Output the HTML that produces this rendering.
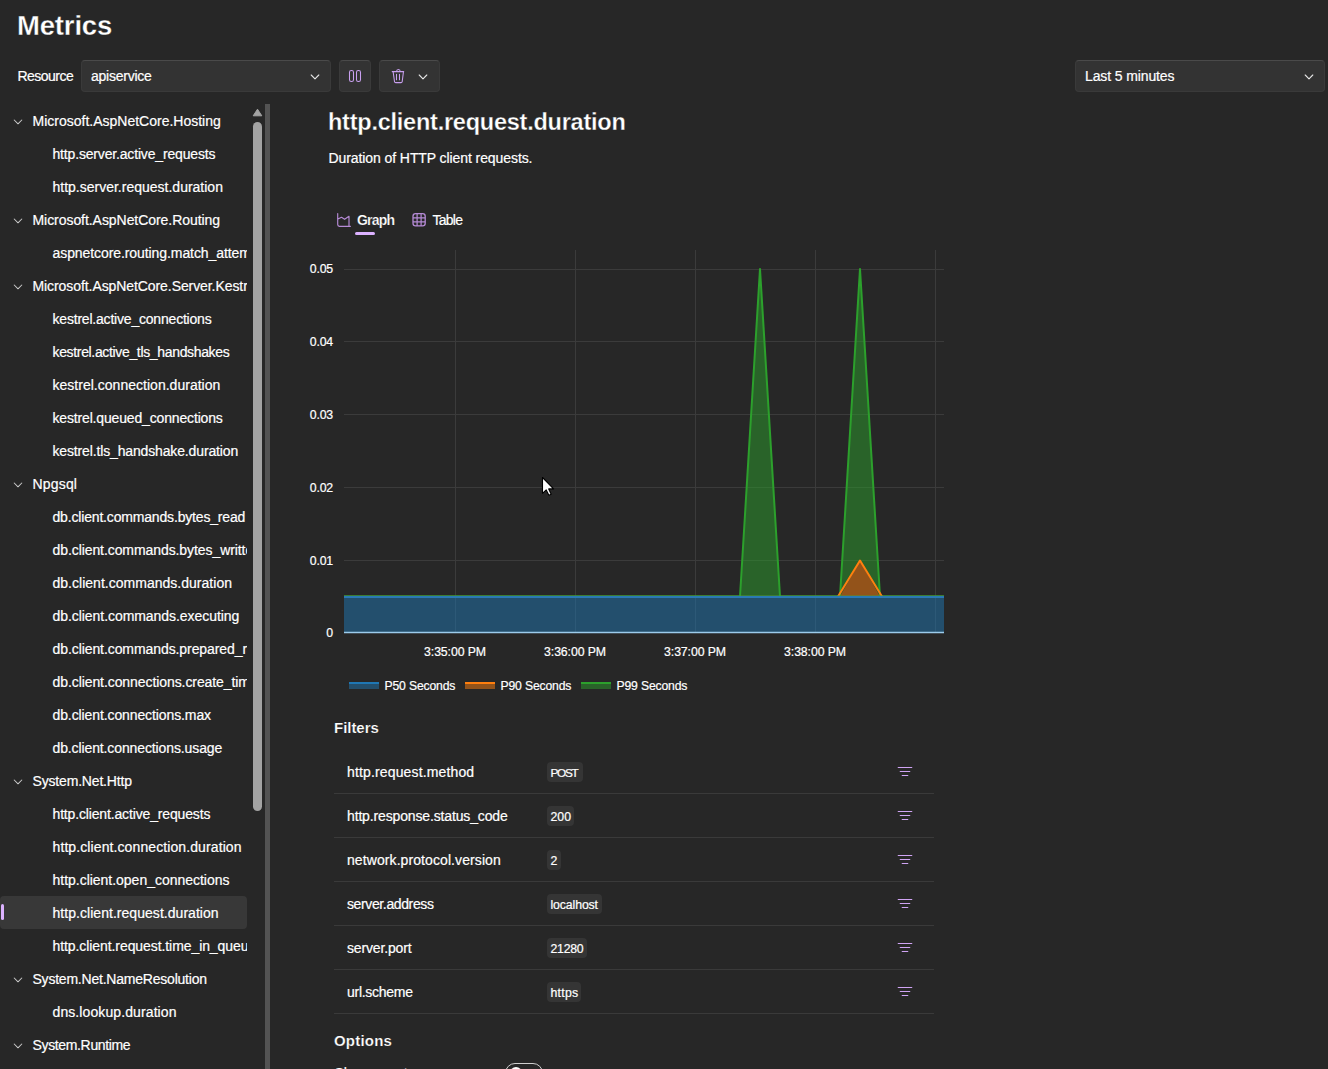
<!DOCTYPE html>
<html><head><meta charset="utf-8"><title>Metrics</title>
<style>
html,body{margin:0;padding:0;}
body{width:1328px;height:1069px;overflow:hidden;background:#272727;position:relative;font-family:"Liberation Sans",sans-serif;color:#fff;}
.t{position:absolute;white-space:nowrap;-webkit-text-stroke:0.2px #fff;}
.ic{position:absolute;overflow:visible;}
.sel{position:absolute;box-sizing:border-box;background:#333333;border:1px solid #3a3a3a;border-top-color:#4a4a4a;border-radius:4px;}
.clip{position:absolute;overflow:hidden;}
.selrow{position:absolute;left:0;width:247px;height:33px;background:#383838;border-radius:4px;}
.ind{position:absolute;left:1px;width:3px;height:16px;border-radius:2px;background:#dcb2ff;}
.badge{position:absolute;height:20px;background:#353535;border-radius:4px;}
</style></head><body>
<div id="tebfe80" class="t" style="left:17px;top:9.47px;font-size:27.5px;line-height:34px;font-weight:700;color:#fff;letter-spacing:-0.167px;-webkit-text-stroke:0.30px #272727;">Metrics</div>
<div id="t3802f4" class="t" style="left:17.5px;top:67.15px;font-size:14.0px;line-height:18px;font-weight:400;color:#fff;letter-spacing:-0.532px;">Resource</div>
<div class="sel" style="left:81px;top:60px;width:250px;height:32px"></div><div id="t47174b" class="t" style="left:91px;top:67.15px;font-size:14.0px;line-height:18px;font-weight:400;color:#fff;letter-spacing:-0.237px;">apiservice</div>
<svg class="ic" style="left:310px;top:72.5px" width="10" height="8" viewBox="0 0 10 8"><path d="M1.2 2 L5 5.8 L8.8 2" fill="none" stroke="#e6e6e6" stroke-width="1.1" stroke-linecap="round" stroke-linejoin="round"/></svg><div class="sel" style="left:339px;top:60px;width:32px;height:32px"></div><svg class="ic" style="left:340px;top:62px" width="28" height="28" viewBox="340 62 28 28"><rect x="349.5" y="70.5" width="4" height="11" rx="1.8" fill="none" stroke="#c9a0f0" stroke-width="1.05"/><rect x="356.5" y="70.5" width="4" height="11" rx="1.8" fill="none" stroke="#c9a0f0" stroke-width="1.05"/></svg><div class="sel" style="left:379px;top:60px;width:61px;height:32px"></div><svg class="ic" style="left:386px;top:64px" width="24" height="24" viewBox="386 64 24 24"><path d="M392.2 71.6 H403.7 M396.6 71.4 Q396.6 69.4 398.4 69.4 Q400.2 69.4 400.2 71.4 M393.2 72.2 L394.5 81.6 Q394.7 82.6 395.7 82.6 H401 Q402 82.6 402.2 81.6 L403.4 72.2 M396.5 74.2 V79.8 M399.5 74.2 V79.8" fill="none" stroke="#c9a0f0" stroke-width="1.05" stroke-linecap="round"/></svg><svg class="ic" style="left:418px;top:72.5px" width="10" height="8" viewBox="0 0 10 8"><path d="M1.2 2 L5 5.8 L8.8 2" fill="none" stroke="#e6e6e6" stroke-width="1.1" stroke-linecap="round" stroke-linejoin="round"/></svg><div class="sel" style="left:1075px;top:60px;width:250px;height:32px"></div><div id="t3238d8" class="t" style="left:1085px;top:67.15px;font-size:14.0px;line-height:18px;font-weight:400;color:#fff;letter-spacing:-0.118px;">Last 5 minutes</div>
<svg class="ic" style="left:1304px;top:72.5px" width="10" height="8" viewBox="0 0 10 8"><path d="M1.2 2 L5 5.8 L8.8 2" fill="none" stroke="#e6e6e6" stroke-width="1.1" stroke-linecap="round" stroke-linejoin="round"/></svg><div class="clip" style="left:0;top:100px;width:247px;height:969px"><svg class="ic" style="left:13px;top:17.5px" width="10" height="8" viewBox="0 0 10 8"><path d="M1.2 2 L5 5.8 L8.8 2" fill="none" stroke="#c8c8c8" stroke-width="1.05" stroke-linecap="round" stroke-linejoin="round"/></svg><div id="t45dcb6" class="t" style="left:32.5px;top:12.15px;font-size:14.0px;line-height:18px;font-weight:400;color:#fff;letter-spacing:0.000px;">Microsoft.AspNetCore.Hosting</div>
<div id="td94e13" class="t" style="left:52.5px;top:45.15px;font-size:14.0px;line-height:18px;font-weight:400;color:#fff;letter-spacing:-0.167px;">http.server.active_requests</div>
<div id="te10f5d" class="t" style="left:52.5px;top:78.15px;font-size:14.0px;line-height:18px;font-weight:400;color:#fff;letter-spacing:0.000px;">http.server.request.duration</div>
<svg class="ic" style="left:13px;top:116.5px" width="10" height="8" viewBox="0 0 10 8"><path d="M1.2 2 L5 5.8 L8.8 2" fill="none" stroke="#c8c8c8" stroke-width="1.05" stroke-linecap="round" stroke-linejoin="round"/></svg><div id="td8bbc0" class="t" style="left:32.5px;top:111.15px;font-size:14.0px;line-height:18px;font-weight:400;color:#fff;letter-spacing:-0.056px;">Microsoft.AspNetCore.Routing</div>
<div id="t6165df" class="t" style="left:52.5px;top:144.15px;font-size:14.0px;line-height:18px;font-weight:400;color:#fff;letter-spacing:-0.08px;">aspnetcore.routing.match_attempts</div>
<svg class="ic" style="left:13px;top:182.5px" width="10" height="8" viewBox="0 0 10 8"><path d="M1.2 2 L5 5.8 L8.8 2" fill="none" stroke="#c8c8c8" stroke-width="1.05" stroke-linecap="round" stroke-linejoin="round"/></svg><div id="t4f10dd" class="t" style="left:32.5px;top:177.15px;font-size:14.0px;line-height:18px;font-weight:400;color:#fff;letter-spacing:-0.08px;">Microsoft.AspNetCore.Server.Kestrel</div>
<div id="t9e4e4d" class="t" style="left:52.5px;top:210.15px;font-size:14.0px;line-height:18px;font-weight:400;color:#fff;letter-spacing:-0.200px;">kestrel.active_connections</div>
<div id="teb6334" class="t" style="left:52.5px;top:243.15px;font-size:14.0px;line-height:18px;font-weight:400;color:#fff;letter-spacing:-0.341px;">kestrel.active_tls_handshakes</div>
<div id="tbc7141" class="t" style="left:52.5px;top:276.15px;font-size:14.0px;line-height:18px;font-weight:400;color:#fff;letter-spacing:0.019px;">kestrel.connection.duration</div>
<div id="t0e443c" class="t" style="left:52.5px;top:309.15px;font-size:14.0px;line-height:18px;font-weight:400;color:#fff;letter-spacing:-0.160px;">kestrel.queued_connections</div>
<div id="td07542" class="t" style="left:52.5px;top:342.15px;font-size:14.0px;line-height:18px;font-weight:400;color:#fff;letter-spacing:-0.145px;">kestrel.tls_handshake.duration</div>
<svg class="ic" style="left:13px;top:380.5px" width="10" height="8" viewBox="0 0 10 8"><path d="M1.2 2 L5 5.8 L8.8 2" fill="none" stroke="#c8c8c8" stroke-width="1.05" stroke-linecap="round" stroke-linejoin="round"/></svg><div id="t6b5c28" class="t" style="left:32.5px;top:375.15px;font-size:14.0px;line-height:18px;font-weight:400;color:#fff;letter-spacing:0.180px;">Npgsql</div>
<div id="t39d226" class="t" style="left:52.5px;top:408.15px;font-size:14.0px;line-height:18px;font-weight:400;color:#fff;letter-spacing:-0.171px;">db.client.commands.bytes_read</div>
<div id="tbe3ab9" class="t" style="left:52.5px;top:441.15px;font-size:14.0px;line-height:18px;font-weight:400;color:#fff;letter-spacing:-0.08px;">db.client.commands.bytes_written</div>
<div id="t870386" class="t" style="left:52.5px;top:474.15px;font-size:14.0px;line-height:18px;font-weight:400;color:#fff;letter-spacing:0.019px;">db.client.commands.duration</div>
<div id="tcdf02e" class="t" style="left:52.5px;top:507.15px;font-size:14.0px;line-height:18px;font-weight:400;color:#fff;letter-spacing:-0.056px;">db.client.commands.executing</div>
<div id="t66de50" class="t" style="left:52.5px;top:540.15px;font-size:14.0px;line-height:18px;font-weight:400;color:#fff;letter-spacing:-0.08px;">db.client.commands.prepared_ratio</div>
<div id="t04cecb" class="t" style="left:52.5px;top:573.15px;font-size:14.0px;line-height:18px;font-weight:400;color:#fff;letter-spacing:-0.08px;">db.client.connections.create_time</div>
<div id="t2ea59d" class="t" style="left:52.5px;top:606.15px;font-size:14.0px;line-height:18px;font-weight:400;color:#fff;letter-spacing:-0.104px;">db.client.connections.max</div>
<div id="t12dd69" class="t" style="left:52.5px;top:639.15px;font-size:14.0px;line-height:18px;font-weight:400;color:#fff;letter-spacing:-0.116px;">db.client.connections.usage</div>
<svg class="ic" style="left:13px;top:677.5px" width="10" height="8" viewBox="0 0 10 8"><path d="M1.2 2 L5 5.8 L8.8 2" fill="none" stroke="#c8c8c8" stroke-width="1.05" stroke-linecap="round" stroke-linejoin="round"/></svg><div id="t6001ff" class="t" style="left:32.5px;top:672.15px;font-size:14.0px;line-height:18px;font-weight:400;color:#fff;letter-spacing:-0.174px;">System.Net.Http</div>
<div id="tb13f27" class="t" style="left:52.5px;top:705.15px;font-size:14.0px;line-height:18px;font-weight:400;color:#fff;letter-spacing:-0.153px;">http.client.active_requests</div>
<div id="t451838" class="t" style="left:52.5px;top:738.15px;font-size:14.0px;line-height:18px;font-weight:400;color:#fff;letter-spacing:0.100px;">http.client.connection.duration</div>
<div id="t2752c8" class="t" style="left:52.5px;top:771.15px;font-size:14.0px;line-height:18px;font-weight:400;color:#fff;letter-spacing:-0.019px;">http.client.open_connections</div>
<div class="selrow" style="top:796px"></div><div class="ind" style="top:804px"></div><div id="ta67757" class="t" style="left:52.5px;top:804.15px;font-size:14.0px;line-height:18px;font-weight:400;color:#fff;letter-spacing:0.042px;">http.client.request.duration</div>
<div id="t272849" class="t" style="left:52.5px;top:837.15px;font-size:14.0px;line-height:18px;font-weight:400;color:#fff;letter-spacing:-0.08px;">http.client.request.time_in_queue</div>
<svg class="ic" style="left:13px;top:875.5px" width="10" height="8" viewBox="0 0 10 8"><path d="M1.2 2 L5 5.8 L8.8 2" fill="none" stroke="#c8c8c8" stroke-width="1.05" stroke-linecap="round" stroke-linejoin="round"/></svg><div id="t0b0372" class="t" style="left:32.5px;top:870.15px;font-size:14.0px;line-height:18px;font-weight:400;color:#fff;letter-spacing:-0.218px;">System.Net.NameResolution</div>
<div id="t178e2d" class="t" style="left:52.5px;top:903.15px;font-size:14.0px;line-height:18px;font-weight:400;color:#fff;letter-spacing:0.100px;">dns.lookup.duration</div>
<svg class="ic" style="left:13px;top:941.5px" width="10" height="8" viewBox="0 0 10 8"><path d="M1.2 2 L5 5.8 L8.8 2" fill="none" stroke="#c8c8c8" stroke-width="1.05" stroke-linecap="round" stroke-linejoin="round"/></svg><div id="t611d66" class="t" style="left:32.5px;top:936.15px;font-size:14.0px;line-height:18px;font-weight:400;color:#fff;letter-spacing:-0.349px;">System.Runtime</div>
</div><svg class="ic" style="left:252px;top:108px" width="11" height="9" viewBox="0 0 11 9"><path d="M5.5 1.2 L9.8 7.8 H1.2 Z" fill="#a3a3a3" stroke="#a3a3a3" stroke-width="1" stroke-linejoin="round"/></svg><div style="position:absolute;left:253px;top:122px;width:9px;height:689px;border-radius:4.5px;background:#a3a3a3"></div><div style="position:absolute;left:265px;top:104px;width:5px;height:965px;background:#535353"></div><div id="t851597" class="t" style="left:328px;top:107.96px;font-size:23.5px;line-height:29px;font-weight:700;color:#fff;letter-spacing:-0.237px;-webkit-text-stroke:0.30px #272727;">http.client.request.duration</div>
<div id="ta14f55" class="t" style="left:328.5px;top:149.15px;font-size:14.0px;line-height:18px;font-weight:400;color:#fff;letter-spacing:-0.085px;">Duration of HTTP client requests.</div>
<svg class="ic" style="left:334px;top:210px" width="20" height="20" viewBox="334 210 20 20"><path d="M337.7 213.6 V224.6 Q337.7 226.3 339.4 226.3 H350.4 M337.9 219.1 L341.5 217.3 L344.6 219.3 L349 216.3 V226.3" fill="none" stroke="#b68bd6" stroke-width="1.15" stroke-linejoin="round" stroke-linecap="round"/></svg><div id="t999c4c" class="t" style="left:357px;top:210.65px;font-size:14.0px;line-height:18px;font-weight:700;color:#fff;letter-spacing:-0.825px;-webkit-text-stroke:0.20px #272727;">Graph</div>
<div style="position:absolute;left:355px;top:232px;width:20px;height:3px;border-radius:2px;background:#dcb2ff"></div><svg class="ic" style="left:409px;top:210px" width="20" height="20" viewBox="409 210 20 20"><rect x="413" y="213.7" width="12.2" height="12.2" rx="2.6" fill="none" stroke="#b68bd6" stroke-width="1.3"/><path d="M413 217.8 H425.2 M413 221.9 H425.2 M417.1 213.7 V225.9 M421.1 213.7 V225.9" stroke="#b68bd6" stroke-width="1.2"/></svg><div id="t930568" class="t" style="left:432.5px;top:210.65px;font-size:14.0px;line-height:18px;font-weight:400;color:#fff;letter-spacing:-0.750px;">Table</div>
<svg class="ic" style="left:0;top:0" width="1328" height="1069"><line x1="344" y1="269.5" x2="944" y2="269.5" stroke="#3b3b3b" stroke-width="1"/><line x1="344" y1="341.5" x2="944" y2="341.5" stroke="#3b3b3b" stroke-width="1"/><line x1="344" y1="414.5" x2="944" y2="414.5" stroke="#3b3b3b" stroke-width="1"/><line x1="344" y1="487.5" x2="944" y2="487.5" stroke="#3b3b3b" stroke-width="1"/><line x1="344" y1="560.5" x2="944" y2="560.5" stroke="#3b3b3b" stroke-width="1"/><line x1="455.5" y1="250" x2="455.5" y2="632" stroke="#3b3b3b" stroke-width="1"/><line x1="575.5" y1="250" x2="575.5" y2="632" stroke="#3b3b3b" stroke-width="1"/><line x1="695.5" y1="250" x2="695.5" y2="632" stroke="#3b3b3b" stroke-width="1"/><line x1="815.5" y1="250" x2="815.5" y2="632" stroke="#3b3b3b" stroke-width="1"/><line x1="935.5" y1="250" x2="935.5" y2="632" stroke="#3b3b3b" stroke-width="1"/><path d="M740 596.5 L760 269 L780 596.5 Z" fill="rgba(44,160,44,0.5)"/><path d="M840 596.5 L860 269 L880 596.5 Z" fill="rgba(44,160,44,0.5)"/><path d="M840 596.5 L860 560.5 L880 596.5 Z" fill="#272727"/><path d="M840 596.5 L860 560.5 L880 596.5 Z" fill="rgba(255,127,14,0.5)"/><rect x="344" y="596.5" width="600" height="35.5" fill="rgba(31,119,180,0.5)"/><path d="M344 596.5 H740 L760 269 L780 596.5 H840 L860 269 L880 596.5 H944" fill="none" stroke="#2ca02c" stroke-width="2" stroke-linejoin="round"/><path d="M838 596.5 L860 560.5 L882 596.5" fill="none" stroke="#ff7f0e" stroke-width="2" stroke-linejoin="round"/><path d="M344 597.0 H944" fill="none" stroke="#2a7ab4" stroke-width="2"/><line x1="344" y1="595.5" x2="944" y2="595.5" stroke="rgba(80,150,60,0.5)" stroke-width="1"/><line x1="344" y1="632.5" x2="944" y2="632.5" stroke="#9ccbeb" stroke-width="1.3"/></svg><div id="t915501" class="t" style="left:333px;top:261.74px;font-size:12.3px;line-height:15px;font-weight:400;color:#fff;letter-spacing:-0.167px;transform:translateX(-100%);">0.05</div>
<div id="t3482f2" class="t" style="left:333px;top:334.74px;font-size:12.3px;line-height:15px;font-weight:400;color:#fff;letter-spacing:-0.167px;transform:translateX(-100%);">0.04</div>
<div id="tc014f8" class="t" style="left:333px;top:407.74px;font-size:12.3px;line-height:15px;font-weight:400;color:#fff;letter-spacing:-0.167px;transform:translateX(-100%);">0.03</div>
<div id="t3793fc" class="t" style="left:333px;top:480.74px;font-size:12.3px;line-height:15px;font-weight:400;color:#fff;letter-spacing:-0.167px;transform:translateX(-100%);">0.02</div>
<div id="ta8aa0a" class="t" style="left:333px;top:553.74px;font-size:12.3px;line-height:15px;font-weight:400;color:#fff;letter-spacing:-0.167px;transform:translateX(-100%);">0.01</div>
<div id="t180688" class="t" style="left:333px;top:625.74px;font-size:12.3px;line-height:15px;font-weight:400;color:#fff;letter-spacing:0.000px;transform:translateX(-100%);">0</div>
<div id="t86305c" class="t" style="left:455px;top:644.74px;font-size:12.3px;line-height:15px;font-weight:400;color:#fff;letter-spacing:-0.111px;transform:translateX(-50%);">3:35:00 PM</div>
<div id="t0578f0" class="t" style="left:575px;top:644.74px;font-size:12.3px;line-height:15px;font-weight:400;color:#fff;letter-spacing:-0.111px;transform:translateX(-50%);">3:36:00 PM</div>
<div id="t9fac59" class="t" style="left:695px;top:644.74px;font-size:12.3px;line-height:15px;font-weight:400;color:#fff;letter-spacing:-0.111px;transform:translateX(-50%);">3:37:00 PM</div>
<div id="t175f17" class="t" style="left:815px;top:644.74px;font-size:12.3px;line-height:15px;font-weight:400;color:#fff;letter-spacing:-0.111px;transform:translateX(-50%);">3:38:00 PM</div>
<div style="position:absolute;left:349px;top:682px;width:30px;height:7px;background:rgba(31,119,180,0.5)"><div style="height:2px;background:rgb(31,119,180)"></div></div><div id="tfc4c2d" class="t" style="left:384.5px;top:678.57px;font-size:12.2px;line-height:15px;font-weight:400;color:#fff;letter-spacing:-0.160px;">P50 Seconds</div>
<div style="position:absolute;left:465px;top:682px;width:30px;height:7px;background:rgba(255,127,14,0.5)"><div style="height:2px;background:rgb(255,127,14)"></div></div><div id="t4cee07" class="t" style="left:500.5px;top:678.57px;font-size:12.2px;line-height:15px;font-weight:400;color:#fff;letter-spacing:-0.160px;">P90 Seconds</div>
<div style="position:absolute;left:581px;top:682px;width:30px;height:7px;background:rgba(44,160,44,0.5)"><div style="height:2px;background:rgb(44,160,44)"></div></div><div id="t214a08" class="t" style="left:616.5px;top:678.57px;font-size:12.2px;line-height:15px;font-weight:400;color:#fff;letter-spacing:-0.160px;">P99 Seconds</div>
<div id="t3e8afa" class="t" style="left:334px;top:718.30px;font-size:15px;line-height:19px;font-weight:700;color:#fff;letter-spacing:-0.036px;-webkit-text-stroke:0.20px #272727;">Filters</div>
<div id="t9626ed" class="t" style="left:347px;top:763.15px;font-size:14.0px;line-height:18px;font-weight:400;color:#fff;letter-spacing:0.145px;">http.request.method</div>
<div class="badge" style="left:547px;top:762px;width:35.5px"></div><div id="t81569c" class="t" style="left:550.5px;top:766.01px;font-size:11.8px;line-height:15px;font-weight:400;color:#fff;letter-spacing:-1.333px;">POST</div>
<svg class="ic" style="left:894px;top:763px" width="22" height="14" viewBox="894 763 22 14"><path d="M898.2 767.5 H911.8 M900.2 771.5 H909.8 M902.2 775.5 H907.8" stroke="#d0a4f4" stroke-width="1.1" stroke-linecap="round"/></svg><div style="position:absolute;left:334px;top:793px;width:600px;height:1px;background:#3a3a3a"></div><div id="t1e54dd" class="t" style="left:347px;top:807.15px;font-size:14.0px;line-height:18px;font-weight:400;color:#fff;letter-spacing:-0.147px;">http.response.status_code</div>
<div class="badge" style="left:547px;top:806px;width:27px"></div><div id="t262265" class="t" style="left:550.5px;top:809.84px;font-size:12.3px;line-height:15px;font-weight:400;color:#fff;letter-spacing:0.000px;">200</div>
<svg class="ic" style="left:894px;top:807px" width="22" height="14" viewBox="894 807 22 14"><path d="M898.2 811.5 H911.8 M900.2 815.5 H909.8 M902.2 819.5 H907.8" stroke="#d0a4f4" stroke-width="1.1" stroke-linecap="round"/></svg><div style="position:absolute;left:334px;top:837px;width:600px;height:1px;background:#3a3a3a"></div><div id="t280854" class="t" style="left:347px;top:851.15px;font-size:14.0px;line-height:18px;font-weight:400;color:#fff;letter-spacing:0.087px;">network.protocol.version</div>
<div class="badge" style="left:547px;top:850px;width:13.5px"></div><div id="tadc199" class="t" style="left:550.5px;top:853.84px;font-size:12.3px;line-height:15px;font-weight:400;color:#fff;letter-spacing:0.000px;">2</div>
<svg class="ic" style="left:894px;top:851px" width="22" height="14" viewBox="894 851 22 14"><path d="M898.2 855.5 H911.8 M900.2 859.5 H909.8 M902.2 863.5 H907.8" stroke="#d0a4f4" stroke-width="1.1" stroke-linecap="round"/></svg><div style="position:absolute;left:334px;top:881px;width:600px;height:1px;background:#3a3a3a"></div><div id="t2dea4c" class="t" style="left:347px;top:895.15px;font-size:14.0px;line-height:18px;font-weight:400;color:#fff;letter-spacing:-0.376px;">server.address</div>
<div class="badge" style="left:547px;top:894px;width:54.7px"></div><div id="t414af4" class="t" style="left:550.5px;top:897.84px;font-size:12.3px;line-height:15px;font-weight:400;color:#fff;letter-spacing:-0.125px;">localhost</div>
<svg class="ic" style="left:894px;top:895px" width="22" height="14" viewBox="894 895 22 14"><path d="M898.2 899.5 H911.8 M900.2 903.5 H909.8 M902.2 907.5 H907.8" stroke="#d0a4f4" stroke-width="1.1" stroke-linecap="round"/></svg><div style="position:absolute;left:334px;top:925px;width:600px;height:1px;background:#3a3a3a"></div><div id="t90246c" class="t" style="left:347px;top:939.15px;font-size:14.0px;line-height:18px;font-weight:400;color:#fff;letter-spacing:-0.150px;">server.port</div>
<div class="badge" style="left:547px;top:938px;width:39.5px"></div><div id="t619fb6" class="t" style="left:550.5px;top:941.84px;font-size:12.3px;line-height:15px;font-weight:400;color:#fff;letter-spacing:-0.250px;">21280</div>
<svg class="ic" style="left:894px;top:939px" width="22" height="14" viewBox="894 939 22 14"><path d="M898.2 943.5 H911.8 M900.2 947.5 H909.8 M902.2 951.5 H907.8" stroke="#d0a4f4" stroke-width="1.1" stroke-linecap="round"/></svg><div style="position:absolute;left:334px;top:969px;width:600px;height:1px;background:#3a3a3a"></div><div id="teabf58" class="t" style="left:347px;top:983.15px;font-size:14.0px;line-height:18px;font-weight:400;color:#fff;letter-spacing:-0.278px;">url.scheme</div>
<div class="badge" style="left:547px;top:982px;width:34.4px"></div><div id="t7e9cd3" class="t" style="left:550.5px;top:985.84px;font-size:12.3px;line-height:15px;font-weight:400;color:#fff;letter-spacing:0.250px;">https</div>
<svg class="ic" style="left:894px;top:983px" width="22" height="14" viewBox="894 983 22 14"><path d="M898.2 987.5 H911.8 M900.2 991.5 H909.8 M902.2 995.5 H907.8" stroke="#d0a4f4" stroke-width="1.1" stroke-linecap="round"/></svg><div style="position:absolute;left:334px;top:1013px;width:600px;height:1px;background:#3a3a3a"></div><div id="tcf9596" class="t" style="left:334px;top:1031.30px;font-size:15px;line-height:19px;font-weight:700;color:#fff;letter-spacing:0.202px;-webkit-text-stroke:0.20px #272727;">Options</div>
<div id="tc83a1d" class="t" style="left:334.5px;top:1063.95px;font-size:14.0px;line-height:18px;font-weight:400;color:#fff;letter-spacing:0.000px;">Show count</div>
<div style="position:absolute;left:505px;top:1063px;width:36px;height:18px;border:1px solid #cfcfcf;border-radius:10px"></div><div style="position:absolute;left:510px;top:1067px;width:12px;height:12px;border-radius:6px;background:#fff"></div><svg class="ic" style="left:541px;top:476px" width="14" height="20" viewBox="0 0 14 20"><path d="M1.5 1.5 V17.3 L5.2 13.9 L7.9 19.3 L10.2 18.3 L7.7 12.9 H12.6 Z" fill="#fff" stroke="#000" stroke-width="1.1" stroke-linejoin="round"/></svg>
</body></html>
